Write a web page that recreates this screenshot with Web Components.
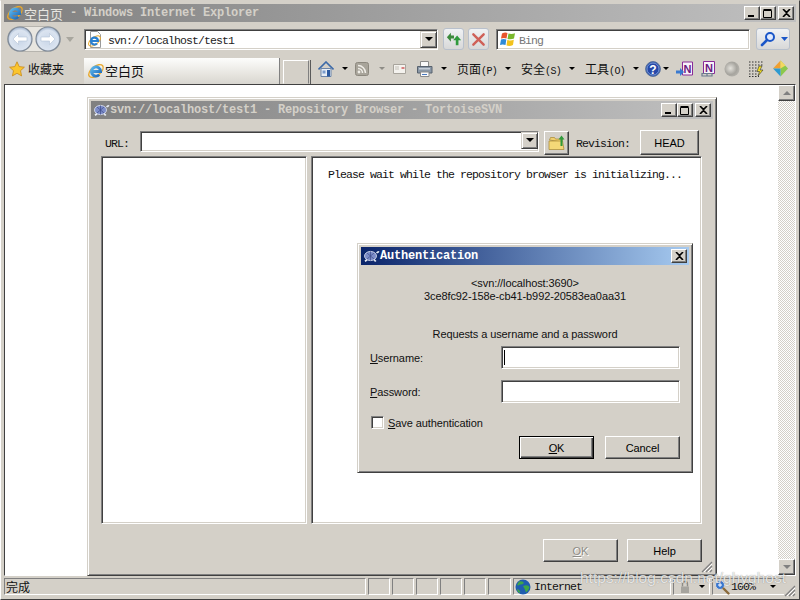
<!DOCTYPE html>
<html>
<head>
<meta charset="utf-8">
<style>
  html, body { margin: 0; padding: 0; width: 800px; height: 600px; overflow: hidden; background: #d4d0c8; }
</style>
</head>
<body>
<ie-window>
  <ie-titlebar slot="title"></ie-titlebar>
  <ie-addressbar slot="address"></ie-addressbar>
  <ie-commandbar slot="command"></ie-commandbar>
  <ie-statusbar slot="status"></ie-statusbar>
  <repo-browser slot="content"></repo-browser>
  <auth-dialog slot="content"></auth-dialog>
</ie-window>

<script>
// shared drawings, keyed by name
const NAV_GRAD = `<radialGradient id="n" cx=".5" cy=".55" r=".55"><stop offset="0" stop-color="#c9d6e8"/><stop offset=".75" stop-color="#dbe4f0"/><stop offset="1" stop-color="#9fb2cc"/></radialGradient>`;
const ICONS = {
  ie: `<svg viewBox="0 0 18 18" width="18" height="18"><defs><linearGradient id="e" x1="0" y1="0" x2="1" y2="1"><stop offset="0" stop-color="#5cb8ee"/><stop offset="1" stop-color="#1a66b8"/></linearGradient></defs><ellipse cx="9" cy="9" rx="8.500" ry="4.600" transform="rotate(-38 9 9)" fill="none" stroke="#e8a82c" stroke-width="1.300"/><path d="M4.600 9.500h9a4.600 4.600 0 1 0-1.400 3.300" fill="none" stroke="url(#e)" stroke-width="2.800"/></svg>`,
  back: `<svg viewBox="0 0 26 26" width="26" height="26"><defs>${NAV_GRAD}</defs><circle cx="13" cy="13" r="12" fill="url(#n)" stroke="#7f8a98" stroke-width="1.200"/><path d="M6 13l5.500-5.500V11H20v4h-8.500v3.500z" fill="#fff" stroke="#b4c2d6" stroke-width=".6"/></svg>`,
  forward: `<svg viewBox="0 0 26 26" width="26" height="26"><defs>${NAV_GRAD}</defs><circle cx="13" cy="13" r="12" fill="url(#n)" stroke="#7f8a98" stroke-width="1.200"/><path d="M20 13l-5.500-5.500V11H6v4h8.500v3.500z" fill="#fff" stroke="#b4c2d6" stroke-width=".6"/></svg>`,
  page: `<svg viewBox="0 0 16 17" width="16" height="17"><path d="M3.500 .5h7l3 3v13h-10z" fill="#fff" stroke="#9a9a9a"/><ellipse cx="7.500" cy="10" rx="7" ry="3.600" transform="rotate(-38 7.500 10)" fill="none" stroke="#e8a82c"/><path d="M4 10h7a3.500 3.500 0 1 0-1 2.500" fill="none" stroke="#2a80d0" stroke-width="2.200"/></svg>`,
  refresh: `<svg viewBox="0 0 18 18" width="16" height="16"><path d="M1 7l4.500-5v3h3.500v3.500H5.500V12z" fill="#3c8a3c"/><path d="M12.500 5l4.500 5.500h-3V16h-3v-5.500H8z" fill="#2f9a3c"/></svg>`,
  stop: `<svg viewBox="0 0 16 16" width="15" height="15"><path d="M2.500 2.500l11 11M13.500 2.500l-11 11" stroke="#cf6058" stroke-width="2.600" stroke-linecap="round"/></svg>`,
  bing: `<svg viewBox="0 0 18 16" width="18" height="16"><path d="M3 2.500Q6 1 8.500 2L7.500 7.500Q5 6.500 2 7.500z" fill="#e8542c"/><path d="M9.500 2.500Q12.500 3.600 16 2.200L15 7.600Q12 8.800 8.500 8z" fill="#7ab82c"/><path d="M2 8.500Q4.500 7.500 7.300 8.500L6.500 14Q3.500 13 1 14z" fill="#2e8ad8"/><path d="M8.300 9Q12 10 14.800 8.800L14 14Q11 15.500 7.500 14.500z" fill="#f2c21c"/></svg>`,
  search: `<svg viewBox="0 0 16 16" width="16" height="16"><circle cx="10" cy="6" r="4" fill="#dfeaff" stroke="#1a56c8" stroke-width="2"/><path d="M7 9l-5 5" stroke="#1a56c8" stroke-width="2.600" stroke-linecap="round"/></svg>`,
  star: `<svg viewBox="0 0 16 16" width="16" height="16"><path d="M8 .8l2.200 4.800 5.200.6-3.900 3.500 1.100 5.200L8 12.300 3.400 14.900l1.100-5.200L.6 6.200l5.200-.6z" fill="#fbc52e" stroke="#c88a1c" stroke-width=".8"/></svg>`,
  home: `<svg viewBox="0 0 16 16" width="16" height="16"><path d="M3 7.500h10v8H3z" fill="#e8eef6" stroke="#6b84a8"/><path d="M.5 8.500L8 1l7.500 7.500" fill="none" stroke="#3d6aa8" stroke-width="1.600"/><path d="M9 9h3v6.500H9z" fill="#2c5aa0"/><path d="M4.500 9.500h3v3h-3z" fill="#7a9ccc"/></svg>`,
  rss: `<svg viewBox="0 0 14 14" width="14" height="14"><rect x=".5" y=".5" width="13" height="13" rx="2" fill="#a8a49a" stroke="#8c887e"/><circle cx="4" cy="10" r="1.400" fill="#f0eee8"/><path d="M3 6.500a4.500 4.500 0 0 1 4.500 4.500M3 3.500A7.500 7.500 0 0 1 10.500 11" fill="none" stroke="#f0eee8" stroke-width="1.500"/></svg>`,
  mail: `<svg viewBox="0 0 14 14" width="14" height="14"><path d="M.5 2.500h12v9H.5z" fill="#f4f2ee" stroke="#a8a49c"/><path d="M8.500 5h3v2h-3z" fill="#d88080"/><path d="M2 5h4M2 7h4" stroke="#c4c0b8"/></svg>`,
  print: `<svg viewBox="0 0 18 18" width="18" height="18"><path d="M4.500 1.500h8v5h-8z" fill="#fafafa" stroke="#8a8a8a"/><path d="M1.500 6.500h14.500v6.500H1.500z" fill="#8a97a6" stroke="#58626e"/><path d="M3 8h11v1.500H3z" fill="#c6ced8"/><path d="M4.500 12h8.500v4.500H4.500z" fill="#fafafa" stroke="#8a8a8a"/><path d="M6 14.500h5" stroke="#4a7ac0"/></svg>`,
  help: `<svg viewBox="0 0 16 16" width="16" height="16"><circle cx="8" cy="8" r="7.400" fill="#2a55b0" stroke="#5a7098"/><circle cx="8" cy="8" r="6" fill="#2648a8" stroke="#89a4dc" stroke-width=".8"/><text x="8" y="12.500" font-family="Liberation Sans" font-weight="700" font-size="12" text-anchor="middle" fill="#fff">?</text></svg>`,
  onesend: `<svg viewBox="0 0 18 16" width="18" height="16"><path d="M6.500 1h10v13h-10z" fill="#f8f2fa" stroke="#8a2a98"/><text x="11.500" y="11.500" font-family="Liberation Sans" font-weight="700" font-size="11" text-anchor="middle" fill="#6b1a80">N</text><path d="M0 9.500h4V7l4 4-4 4v-2.500H0z" fill="#3a7ad0"/></svg>`,
  onelink: `<svg viewBox="0 0 18 16" width="18" height="16"><path d="M3.500 .5h11v12h-11z" fill="#f8f2fa" stroke="#8a2a98"/><text x="9" y="10.500" font-family="Liberation Sans" font-weight="700" font-size="11" text-anchor="middle" fill="#6b1a80">N</text><path d="M2 12.500h5v2.500H2zM7 12.500h5v2.500H7z" fill="none" stroke="#6a7a90" stroke-width="1.200"/></svg>`,
  orb: `<svg viewBox="0 0 16 16" width="16" height="16"><defs><radialGradient id="o" cx=".4" cy=".45" r=".7"><stop offset="0" stop-color="#e4e2dc"/><stop offset=".6" stop-color="#a6a49e"/><stop offset="1" stop-color="#bcbab4"/></radialGradient></defs><circle cx="8" cy="8" r="7.500" fill="url(#o)"/></svg>`,
  qr: `<svg viewBox="0 0 16 16" width="16" height="16"><path d="M1 1h14M1 4h14M1 7h8M1 10h8M1 13h8M1 15.500h10" stroke="#333" stroke-width="1.200" stroke-dasharray="1.500 1.500"/><path d="M11 5h3l-2 4h3l-5 6 1.500-4.500H9z" fill="#f4e020" stroke="#333" stroke-width=".6"/></svg>`,
  hex: `<svg viewBox="0 0 17 17" width="17" height="17"><path d="M8.500 .5l7.500 8-7.500 8z" fill="#8cc84c"/><path d="M8.500 .5L1 8.500h7.500z" fill="#f0a030"/><path d="M1 8.500l7.500 8V8.500z" fill="#2e9ad0"/><path d="M8.500 .5l5 5-5 3z" fill="#f4d860"/></svg>`,
  globe: `<svg viewBox="0 0 16 16" width="16" height="16"><circle cx="8" cy="8" r="7.500" fill="#1f5db0"/><path d="M4 2.500Q8 1.500 9 4 7 6 5 5.500 3 7 2 6zM8 7q5-2 6.500 1-.5 3-3.500 5.500Q10 10 8 7zM2 10q2 0 3.500 3L4 14q-2-2-2-4z" fill="#3fa648"/></svg>`,
  lock: `<svg viewBox="0 0 12 14" width="12" height="14"><path d="M3.500 6.500V4a2.500 2.500 0 0 1 5 0v2.500" fill="none" stroke="#8e8c86" stroke-width="1.400"/><path d="M2 6.500h8v6.500H2z" fill="#a6a49e"/></svg>`,
  zoom: `<svg viewBox="0 0 16 16" width="16" height="16"><circle cx="6" cy="6" r="4.500" fill="#3a78d0" stroke="#d8d8d8"/><path d="M4 6h4M6 4v4" stroke="#fff"/><path d="M9.500 9.500l5 5" stroke="#8a6a3a" stroke-width="2.400" stroke-linecap="round"/></svg>`,
  turtle: `<svg viewBox="0 0 18 14" width="18" height="14"><ellipse cx="8.500" cy="7" rx="6" ry="4.600" fill="#7c8cc8" stroke="#dfe4f4" stroke-width=".8"/><path d="M5 4l7 6M12 4l-7 6M8.500 2.500v9" stroke="#3c4a88" stroke-width=".7"/><path d="M14 3.500q2-2.500 3.500-1-.5 1.500-2.500 2zM2.500 11.500l2-1.500 1 1.500-2 1.500zM11.500 11l1-1 2 2-1.500 1z" fill="#e8ecf4"/></svg>`,
  folder: `<svg viewBox="0 0 18 18" width="18" height="18"><path d="M1.500 6l1-2.500h4l1 1.500h7l-.5 3z" fill="#f0d070" stroke="#a88830" stroke-width=".7"/><path d="M1 15.500V7h13.500l1.500 8.500z" fill="#f4d878" stroke="#a88830" stroke-width=".7"/><path d="M12.500 12V5.500H10.500l3-4 3 4h-2V12z" fill="#2f9a3c"/></svg>`,
  dropdown: `<svg viewBox="0 0 8 4" width="8" height="4"><path d="M0 0h7L3.500 4z" fill="currentColor"/></svg>`
};

function define(tag, html) {
  customElements.define(tag, class extends HTMLElement {
    constructor() {
      super();
      this.attachShadow({ mode: 'open' });
    }
    connectedCallback() {
      this.shadowRoot.innerHTML = html;
    }
  });
}

class XIcon extends HTMLElement {
  constructor() {
    super();
    this.attachShadow({ mode: 'open' });
  }
  connectedCallback() {
    this.shadowRoot.innerHTML = `<style>:host{display:inline-flex;flex:none;line-height:0}</style>` + (ICONS[this.getAttribute('name')] || '');
  }
}
customElements.define('x-icon', XIcon);

// raised win2k button; attributes: default, disabled
class WinButton extends HTMLElement {
  constructor() {
    super();
    this.attachShadow({ mode: 'open' });
    this.shadowRoot.innerHTML = `
      <style>
        :host { display: flex; align-items: center; justify-content: center; box-sizing: border-box;
          background: #d4d0c8; border: 1px solid; border-color: #fff #404040 #404040 #fff;
          box-shadow: inset -1px -1px 0 #808080;
          font: 11px "Liberation Sans", sans-serif; color: #000; width: 75px; height: 23px; }
        :host([default]) { border: 1px solid #000; box-shadow: inset 1px 1px 0 #fff, inset -1px -1px 0 #404040, inset -2px -2px 0 #808080; }
        :host([disabled]) { color: #8e8c86; text-shadow: 1px 1px 0 #fff; }
      </style><slot></slot>`;
  }
}
customElements.define('win-button', WinButton);

// small caption button drawn with a glyph
define('cap-button', `
  <style>
    :host { display: flex; align-items: center; justify-content: center; box-sizing: border-box; width: 16px; height: 14px;
      background: #d4d0c8; border: 1px solid; border-color: #fff #404040 #404040 #fff; box-shadow: inset -1px -1px 0 #808080; }
    ::slotted(svg) { display: block; }
  </style><slot></slot>`);

define('sunken-box', `
  <style>
    :host { display: block; box-sizing: border-box; background: #fff; border: 1px solid; border-color: #808080 #fff #fff #808080;
      box-shadow: inset 1px 1px 0 #404040, inset -1px -1px 0 #d4d0c8; position: relative; }
  </style><slot></slot>`);

define('ie-window', `
  <style>
    :host { display: grid; grid-template-rows: 18px 34px 28px 492px 21px; width: 800px; height: 600px; box-sizing: border-box;
      padding: 3px 3px 2px; background: #d4d0c8; border: 1px solid; border-color: #d4d0c8 #404040 #404040 #fff; position: relative; }
    .content { position: relative; background: #fff; border: 1px solid; border-color: #404040 #fff #fff #404040; overflow: visible; }
    .scroll { position: absolute; right: 0; top: 0; bottom: 0; width: 17px; display: flex; flex-direction: column; justify-content: flex-end; background: #fff; }
    .track { flex: 1; margin-top: 16px;
      background: repeating-conic-gradient(#d4d0c8 0 25%, #fff 0 50%) 0 0 / 2px 2px; }
    .sb { height: 16px; box-sizing: border-box; background: #d4d0c8; border: 1px solid; border-color: #fff #404040 #404040 #fff; display: flex; align-items: center; justify-content: center; color: #8e8c86; box-shadow: inset -1px -1px 0 #808080; }
    .sb.top { position: absolute; top: 0; left: 0; right: 0; }
    .tri { width: 0; height: 0; border-left: 4px solid transparent; border-right: 4px solid transparent; border-top: 4px solid #808080; }
    .tri.up { border-top: 0; border-bottom: 4px solid #808080; }
  </style>
  <slot name="title"></slot>
  <slot name="address"></slot>
  <slot name="command"></slot>
  <div class="content">
    <div class="scroll"><div class="sb top"><div class="tri up"></div></div><div class="track"></div><div class="sb"><div class="tri"></div></div></div>
    <slot name="content"></slot>
  </div>
  <slot name="status"></slot>`);

define('ie-titlebar', `
  <style>
    :host { display: flex; align-items: center; box-sizing: border-box; background: linear-gradient(90deg, #808080, #c0c0c0); color: #d4d0c8; height: 18px; padding: 0 2px 0 2px; }
    .cn { font: 13px "Noto Sans CJK SC", sans-serif; color: #e8e6e0; }
    .en { font: bold 12px "Liberation Mono", monospace; letter-spacing: -.2px; white-space: pre; flex: 1; }
    .btns { display: flex; }
    .btns cap-button:last-child { margin-left: 2px; }
  </style>
  <x-icon name="ie"></x-icon><span class="cn">空白页</span><span class="en"> - Windows Internet Explorer</span>
  <div class="btns">
    <cap-button><svg width="8" height="8"><rect x="0" y="6" width="6" height="2" fill="#000"/></svg></cap-button>
    <cap-button><svg width="10" height="9"><path d="M.5 1.500h8v7h-8z M.5 .5h8" fill="none" stroke="#000"/></svg></cap-button>
    <cap-button><svg width="9" height="8"><path d="M1 0l3.500 3.500L8 0M1 8l3.500-3.500L8 8" fill="none" stroke="#000" stroke-width="1.600"/></svg></cap-button>
  </div>`);

define('ie-addressbar', `
  <style>
    :host { display: flex; align-items: center; height: 34px; box-sizing: border-box; padding: 0 0 0 3px; font: 11.5px "Liberation Mono", monospace; color: #222; }
    .nav { display: flex; align-items: center; width: 54px; height: 26px; flex: none; padding: 0; box-sizing: border-box; border-radius: 13px; background: #e8e6e0; box-shadow: inset 0 0 0 1px #b6b4ae; }
    .nav x-icon + x-icon { margin-left: 2px; }
    .more { width: 0; height: 0; margin: 0 0 0 5px; flex: none; border-left: 4px solid transparent; border-right: 4px solid transparent; border-top: 5px solid #a8a69e; }
    .addr { width: 354px; height: 21px; margin-left: 10px; flex: none; letter-spacing: -.9px; }
    .combo { position: absolute; right: 0; top: 1px; }
    .sq { margin-left: 5px; flex: none; box-sizing: border-box; width: 21px; height: 22px; display: flex; align-items: center; justify-content: center; border: 1px solid #b8c0cc; border-radius: 3px; background: linear-gradient(#f0f2f4, #d8d8d8); }
    .sq + .sq { margin-left: 4px; }
    .search { margin-left: 7px; width: 254px; height: 21px; flex: none; color: #777; letter-spacing: -.9px; }
    .sbtn { margin-left: 6px; width: 34px; height: 22px; flex: none; display: flex; align-items: center; border: 1px solid #b8c0cc; border-radius: 3px; background: linear-gradient(#f0f2f4, #d8d8d8); box-sizing: border-box; color: #1a56c8; }
    .sbtn x-icon { margin: 0 3px 0 3px; }
    .sbtn i { width: 1px; height: 20px; background: #b8c0cc; margin-right: 2px; }
    .in { display: flex; align-items: center; height: 100%; gap: 5px; padding-left: 2px; }
    .in2 { display: flex; align-items: center; height: 100%; gap: 2px; padding-left: 2px; }
    .in span, .in2 span { margin-top: 2px; }
  </style>
  <div class="nav"><x-icon name="back"></x-icon><x-icon name="forward"></x-icon></div>
  <div class="more"></div>
  <sunken-box class="addr"><div class="in"><x-icon name="page"></x-icon><span>svn://localhost/test1</span></div><combo-arrow class="combo"></combo-arrow></sunken-box>
  <div class="sq"><x-icon name="refresh"></x-icon></div>
  <div class="sq"><x-icon name="stop"></x-icon></div>
  <sunken-box class="search"><div class="in2"><x-icon name="bing"></x-icon><span>Bing</span></div></sunken-box>
  <div class="sbtn"><x-icon name="search"></x-icon><i></i><x-icon name="dropdown" style="margin:0"></x-icon></div>`);

define('combo-arrow', `
  <style>
    :host { display: flex; align-items: center; justify-content: center; box-sizing: border-box; width: 17px; height: 17px; background: #d4d0c8; color: #000;
      border: 1px solid; border-color: #d4d0c8 #404040 #404040 #d4d0c8; box-shadow: inset 1px 1px 0 #fff, inset -1px -1px 0 #808080; }
    i { width: 0; height: 0; border-left: 4px solid transparent; border-right: 4px solid transparent; border-top: 4px solid #000; }
  </style><i></i>`);

define('ie-commandbar', `
  <style>
    :host { display: flex; align-items: center; height: 28px; box-sizing: border-box; font: 12px "Noto Sans CJK SC", sans-serif; color: #111; }
    .fav { display: flex; align-items: center; gap: 3px; width: 80px; padding: 0 0 3px 5px; box-sizing: border-box; flex: none; }
    .tab { display: flex; align-items: center; width: 196px; height: 26px; margin-top: 2px; flex: none; box-sizing: border-box; padding: 0 0 1px 3px; gap: 0; background: linear-gradient(#fdfdfc, #e4e2dc 70%, #d8d6d0); border-right: 1px solid #808080; font-size: 13px; }
    .new { width: 26px; height: 24px; margin: 4px 0 0 3px; flex: none; box-sizing: border-box; border: 1px solid; border-color: #fff #808080 #d4d0c8 #fff; }
    .sep { width: 1px; height: 24px; background: #5a5a5a; margin: 4px 7px 0 1px; flex: none; }
    .tools { display: flex; align-items: center; flex: 1; padding-bottom: 3px; }
    .v { width: 0; height: 0; border-left: 3px solid transparent; border-right: 3px solid transparent; border-top: 3px solid #000; flex: none; }
    .v.g { border-top-color: #8e8c86; }
    .lbl { white-space: nowrap; width: 40px; flex: none; }
    .mn { font: 10px "Liberation Mono", monospace; letter-spacing: -.6px; }
    .a8 { margin-left: 8px; } .a10 { margin-left: 10px; } .a7 { margin-left: 7px; } .a6 { margin-left: 6px; } .a2 { margin-left: 2px; } .a9 { margin-left: 9px; }
  </style>
  <div class="fav"><x-icon name="star"></x-icon><span>收藏夹</span></div>
  <div class="tab"><x-icon name="ie"></x-icon><span>空白页</span></div>
  <div class="new"></div><div class="sep"></div>
  <div class="tools">
    <x-icon name="home"></x-icon><i class="v a8"></i>
    <x-icon name="rss" class="a7"></x-icon><i class="v g a10"></i>
    <x-icon name="mail" class="a8"></x-icon>
    <x-icon name="print" class="a9"></x-icon><i class="v a7"></i>
    <span class="lbl a10">页面<span class="mn">(P)</span></span><i class="v a8"></i>
    <span class="lbl a10">安全<span class="mn">(S)</span></span><i class="v a8"></i>
    <span class="lbl a10">工具<span class="mn">(O)</span></span><i class="v a8"></i>
    <x-icon name="help" class="a6"></x-icon><i class="v a2"></i>
    <x-icon name="onesend" class="a7"></x-icon>
    <x-icon name="onelink" class="a6"></x-icon>
    <x-icon name="orb" class="a6"></x-icon>
    <x-icon name="qr" class="a8"></x-icon>
    <x-icon name="hex" class="a8"></x-icon>
  </div>`);

define('ie-statusbar', `
  <style>
    :host { display: flex; height: 21px; box-sizing: border-box; position: relative; font: 12px "Noto Sans CJK SC", sans-serif; color: #111; align-items: stretch; padding: 2px 0; }
    .p { box-sizing: border-box; border: 1px solid; border-color: #808080 #fff #fff #808080; display: flex; align-items: center; margin-right: 2px; }
    .mark { position: absolute; left: 576px; top: -7px; font: 15.500px "Liberation Sans", sans-serif; color: rgba(255,255,255,.78); text-shadow: 0 0 1px rgba(70,70,70,.6); white-space: nowrap; pointer-events: none; }
    .net { font: 11.500px "Liberation Mono", monospace; letter-spacing: -.9px; gap: 3px; padding-left: 1px; }
    .grip { position: absolute; right: 0; bottom: 0; }
    .drop { width: 0; height: 0; border-left: 3px solid transparent; border-right: 3px solid transparent; border-top: 3px solid #000; }
  </style>
  <div class="p" style="width:362px;padding-left:1px">完成</div>
  <div class="p" style="width:22px"></div><div class="p" style="width:22px"></div><div class="p" style="width:22px"></div><div class="p" style="width:22px"></div>
  <div class="p" style="width:22px"></div><div class="p" style="width:23px"></div>
  <div class="p net" style="width:158px"><x-icon name="globe"></x-icon><span>Internet</span></div>
  <div class="p" style="width:37px;justify-content:center;gap:8px"><x-icon name="lock"></x-icon><i class="drop"></i></div>
  <div class="p net" style="width:72px;border-right:0;gap:1px"><x-icon name="zoom"></x-icon><span>100%</span><i class="drop" style="margin-left:14px"></i></div>
  <svg class="grip" width="13" height="13"><path d="M12 2L2 12M12 6l-6 6M12 10l-2 2" stroke="#808080" stroke-width="1.200"/><path d="M12 4L4 12M12 8l-4 4" stroke="#fff"/></svg>
  <div class="mark">https://blog.csdn.net/ghyghost</div>`);

define('repo-browser', `
  <style>
    :host { position: absolute; left: 82px; top: 12px; width: 630px; height: 479px; box-sizing: border-box; background: #d4d0c8; display: flex; flex-direction: column;
      border: 1px solid; border-color: #d4d0c8 #404040 #404040 #d4d0c8; box-shadow: inset 1px 1px 0 #fff, inset -1px -1px 0 #808080; padding: 3px 3px 2px; }
    .title { display: flex; align-items: center; height: 18px; flex: none; background: linear-gradient(90deg, #808080, #c0c0c0); color: #d4d0c8; font: bold 12px "Liberation Mono", monospace; letter-spacing: -.2px; padding: 0 2px 0 1px; gap: 0; }
    .title span { flex: 1; white-space: pre; }
    .caps { display: flex; letter-spacing: 0; }
    .caps cap-button:last-child { margin-left: 2px; }
    .url { display: flex; align-items: center; height: 28px; margin-top: 8px; padding-left: 14px; font: 11.500px "Liberation Mono", monospace; letter-spacing: -.9px; color: #111; flex: none; }
    .url > span { margin-top: 4px; }
    .combo { width: 399px; height: 21px; margin-left: 11px; flex: none; }
    .combo combo-arrow { position: absolute; right: 0; top: 0; }
    .folder { width: 25px; height: 24px; margin: 4px 0 0 5px; box-sizing: border-box; border: 1px solid; border-color: #fff #404040 #404040 #fff; display: flex; align-items: center; justify-content: center; box-shadow: inset -1px -1px 0 #808080; flex: none; }
    .rev { margin-left: 7px; width: 64px; flex: none; }
    .head { width: 59px; height: 25px; margin-top: 3px; letter-spacing: 0; flex: none; }
    .panes { display: flex; flex: 1; gap: 4px; margin: 1px 11px 0 10px; min-height: 0; }
    .left { width: 206px; flex: none; }
    .right { flex: 1; padding: 11px 16px; font: 11.500px "Liberation Mono", monospace; letter-spacing: -.9px; color: #111; white-space: nowrap; }
    .foot { display: flex; justify-content: flex-end; gap: 9px; height: 49px; padding: 15px 11px 0 0; box-sizing: border-box; flex: none; position: relative; }
    .grip { position: absolute; right: 0; bottom: 0; }
  </style>
  <div class="title"><x-icon name="turtle"></x-icon><span>svn://localhost/test1 - Repository Browser - TortoiseSVN</span>
    <div class="caps">
      <cap-button><svg width="8" height="8"><rect x="0" y="6" width="6" height="2" fill="#000"/></svg></cap-button>
      <cap-button><svg width="10" height="9"><path d="M.5 1.500h8v7h-8z M.5 .5h8" fill="none" stroke="#000"/></svg></cap-button>
      <cap-button><svg width="9" height="8"><path d="M1 0l3.500 3.500L8 0M1 8l3.500-3.500L8 8" fill="none" stroke="#000" stroke-width="1.600"/></svg></cap-button>
    </div>
  </div>
  <div class="url">
    <span>URL:</span>
    <sunken-box class="combo"><combo-arrow></combo-arrow></sunken-box>
    <div class="folder"><x-icon name="folder"></x-icon></div>
    <span class="rev">Revision:</span>
    <win-button class="head">HEAD</win-button>
  </div>
  <div class="panes">
    <sunken-box class="left"></sunken-box>
    <sunken-box class="right">Please wait while the repository browser is initializing...</sunken-box>
  </div>
  <div class="foot">
    <win-button disabled><span><u>O</u>K</span></win-button>
    <win-button>Help</win-button>
    <svg class="grip" width="12" height="12"><path d="M11 1L1 11M11 5l-6 6M11 9l-2 2" stroke="#808080" stroke-width="1.200"/><path d="M11 3L3 11M11 7l-4 4" stroke="#fff"/></svg>
  </div>`);

define('auth-dialog', `
  <style>
    :host { position: absolute; left: 352px; top: 158px; width: 336px; height: 230px; box-sizing: border-box; background: #d4d0c8; display: flex; flex-direction: column;
      border: 1px solid; border-color: #d4d0c8 #404040 #404040 #d4d0c8; box-shadow: inset 1px 1px 0 #fff, inset -1px -1px 0 #808080; padding: 3px 3px 2px;
      font: 11px "Liberation Sans", sans-serif; letter-spacing: -.1px; color: #111; }
    .title { display: flex; align-items: center; height: 18px; flex: none; background: linear-gradient(90deg, #0a246a, #a6caf0); color: #fff; font: bold 12px "Liberation Mono", monospace; letter-spacing: -.2px; padding: 0 2px 0 1px; gap: 0; }
    .title span { flex: 1; }
    .info { text-align: center; margin-top: 12px; line-height: 13px; }
    .req { text-align: center; margin-top: 25px; line-height: 13px; }
    .row { display: grid; grid-template-columns: 131px 179px; align-items: center; padding-left: 9px; }
    .row sunken-box { height: 23px; }
    .row.u { margin-top: 5px; }
    .row.p { margin-top: 11px; }
    .caret { position: absolute; left: 2px; top: 3px; width: 1px; height: 15px; background: #000; }
    .chk { display: flex; align-items: center; gap: 4px; padding-left: 10px; margin-top: 13px; height: 13px; }
    .chk sunken-box { width: 13px; height: 13px; flex: none; }
    .btns { display: flex; justify-content: flex-end; gap: 11px; margin-top: 7px; padding-right: 9px; }
  </style>
  <div class="title"><x-icon name="turtle"></x-icon><span>Authentication</span>
    <cap-button><svg width="9" height="8"><path d="M1 0l3.500 3.500L8 0M1 8l3.500-3.500L8 8" fill="none" stroke="#000" stroke-width="1.600"/></svg></cap-button>
  </div>
  <div class="info">&lt;svn://localhost:3690&gt;<br>3ce8fc92-158e-cb41-b992-20583ea0aa31</div>
  <div class="req">Requests a username and a password</div>
  <div class="row u"><span><u>U</u>sername:</span><sunken-box><i class="caret"></i></sunken-box></div>
  <div class="row p"><span><u>P</u>assword:</span><sunken-box></sunken-box></div>
  <div class="chk"><sunken-box></sunken-box><span><u>S</u>ave authentication</span></div>
  <div class="btns"><win-button default><span><u>O</u>K</span></win-button><win-button>Cancel</win-button></div>`);
</script>
</body>
</html>
